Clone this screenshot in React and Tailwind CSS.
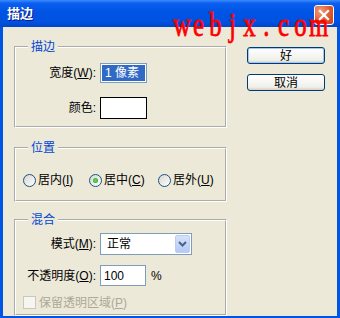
import React from "react";

const font = { fontFamily: "'Liberation Sans','Noto Sans CJK SC',sans-serif" };

function Radio({ checked, label, u, className = "" }) {
  return (
    <div className={"flex items-center gap-[2px] " + className}>
      <span className="w-[13px] h-[13px] rounded-full border border-[#1c5180] bg-gradient-to-br from-[#d6d6d0] to-white flex items-center justify-center shrink-0">
        {checked && <span className="w-[5px] h-[5px] rounded-full bg-[radial-gradient(circle,#62e05e,#21a121)]" />}
      </span>
      <span className="leading-[16px] whitespace-nowrap">
        {label}(<u>{u}</u>)
      </span>
    </div>
  );
}

function Group({ title, children, className = "" }) {
  return (
    <fieldset className={"w-[213px] min-w-0 m-0 p-0 border-2 border-white [border-style:groove] " + className}>
      <legend className="ml-[12px] px-[3px] text-[#0046d5] leading-[16px] text-[12px]">{title}</legend>
      {children}
    </fieldset>
  );
}

const mark = "webjx.com".split("");

export default function App() {
  return (
    <div className="w-[340px] h-[318px] flex flex-col bg-[#0055e5] relative overflow-hidden text-[12px] text-black" style={font}>
      {/* title bar */}
      <div className="h-[27px] shrink-0 flex items-center justify-between pl-[7px] pr-[6px] bg-[linear-gradient(to_bottom,#3d8cff_0%,#0a5ff0_12%,#0054e3_45%,#0052e0_80%,#0046cc_100%)]">
        <span className="text-white font-bold text-[13px] leading-[16px] [text-shadow:1px_1px_0_#0a1883]">描边</span>
        <div className="w-[20px] h-[20px] mt-[2px] rounded-[3px] border border-white bg-[radial-gradient(circle_at_30%_30%,#f0a080,#e0582e_55%,#c8401a)] flex items-center justify-center">
          <svg width="12" height="12" viewBox="0 0 12 12">
            <path d="M2 2 L10 10 M10 2 L2 10" stroke="white" strokeWidth="2.2" strokeLinecap="square" />
          </svg>
        </div>
      </div>

      {/* body */}
      <div className="flex-1 mx-[3px] mb-[4px] bg-[#ece9d8] flex pl-[11px] pt-[12px]">
        <div className="flex flex-col">
          <Group title="描边">
            <div className="grid grid-cols-[80px_47px] gap-x-[4px] gap-y-[14px] items-center pt-[8px] pb-[7px]">
              <span className="text-right leading-[16px] whitespace-nowrap">
                宽度(<u>W</u>):
              </span>
              <div className="h-[20px] border border-[#7f9db9] bg-white p-[1px] flex">
                <span className="flex-1 bg-[#316ac5] text-white leading-[16px] pl-[3px] whitespace-nowrap">1 像素</span>
              </div>
              <span className="text-right leading-[16px]">颜色:</span>
              <div className="h-[22px] border border-black bg-white" />
            </div>
          </Group>

          <Group title="位置" className="mt-[12px]">
            <div className="flex items-center pl-[7px] pt-[9px] pb-[5px] h-[30px] box-content">
              <Radio label="居内" u="I" className="w-[66px]" />
              <Radio label="居中" u="C" checked className="w-[69px]" />
              <Radio label="居外" u="U" />
            </div>
          </Group>

          <Group title="混合" className="mt-[10px]">
            <div className="grid grid-cols-[80px_auto] gap-x-[4px] items-center pt-[5px] pb-[5px]">
              <span className="text-right leading-[16px] whitespace-nowrap">
                模式(<u>M</u>):
              </span>
              <div className="w-[92px] h-[22px] border border-[#7f9db9] bg-white flex items-center pl-[6px] pr-[1px]">
                <span className="flex-1 leading-[16px]">正常</span>
                <span className="w-[15px] h-[18px] rounded-[2px] border border-[#b9cdf7] bg-[linear-gradient(to_bottom,#d6e2fc,#b4c9f6)] flex items-center justify-center">
                  <svg width="9" height="6" viewBox="0 0 9 6">
                    <path d="M1 1 L4.5 4.5 L8 1" stroke="#4d6185" strokeWidth="2" fill="none" />
                  </svg>
                </span>
              </div>

              <span className="text-right leading-[16px] whitespace-nowrap mt-[10px]">
                不透明度(<u>O</u>):
              </span>
              <div className="flex items-center mt-[10px]">
                <div className="w-[46px] h-[21px] border border-[#7f9db9] bg-white flex items-center pl-[3px]">
                  <span className="leading-[16px]">100</span>
                </div>
                <span className="ml-[5px] leading-[16px]">%</span>
              </div>

              <div className="col-span-2 flex items-center gap-[3px] pl-[7px] mt-[10px] h-[13px]">
                <span className="w-[13px] h-[13px] border border-[#cac8bb] bg-[#f6f5f0] shrink-0" />
                <span className="text-[#aca899] leading-[16px] whitespace-nowrap">
                  保留透明区域(<u>P</u>)
                </span>
              </div>
            </div>
          </Group>
        </div>

        <div className="ml-[20px] pt-[8px] flex flex-col gap-[10px]">
          <button className="w-[78px] h-[17px] rounded-[3px] border border-[#003c74] bg-[linear-gradient(to_bottom,#ffffff,#f0f0ea_80%,#d6d0c5)] shadow-[inset_0_0_0_1px_#a8c6f0] leading-[14px] text-[12px]">
            好
          </button>
          <button className="w-[78px] h-[17px] rounded-[3px] border border-[#003c74] bg-[linear-gradient(to_bottom,#ffffff,#f0f0ea_80%,#d6d0c5)] leading-[14px] text-[12px]">
            取消
          </button>
        </div>
      </div>

      {/* watermark overlay */}
      <div
        className="absolute left-[173px] top-[9px] flex text-[#ff0000] text-[33px] leading-none origin-left scale-x-[0.75] whitespace-nowrap pointer-events-none [-webkit-text-stroke:0.8px_#ff0000]"
        style={{ fontFamily: "'Liberation Serif',serif" }}
      >
        {mark.map((c, i) => (
          <span key={i} className="w-[22.67px] text-center">
            {c}
          </span>
        ))}
      </div>
    </div>
  );
}
